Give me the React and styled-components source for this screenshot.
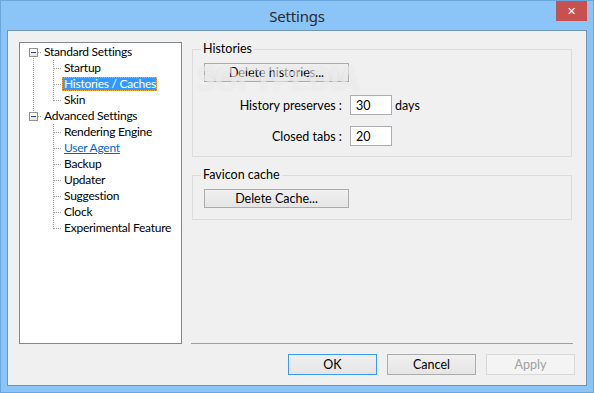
import React from "react";
import styled, { createGlobalStyle } from "styled-components";

const GlobalStyle = createGlobalStyle`
  html, body {
    margin: 0;
    padding: 0;
    background: #ffffff;
  }
  body {
    font-family: Lato, "Noto Sans", sans-serif;
    font-size: 12px;
    color: #000;
  }
`;

const tree = [
  {
    label: "Standard Settings",
    children: ["Startup", "Histories / Caches", "Skin"],
  },
  {
    label: "Advanced Settings",
    children: [
      "Rendering Engine",
      "User Agent",
      "Backup",
      "Updater",
      "Suggestion",
      "Clock",
      "Experimental Feature",
    ],
  },
];

const Settings = () => {
  return (
    <Window>
      <TitleBar>
        <span />
        <Title>Settings</Title>
        <CloseButton>✕</CloseButton>
      </TitleBar>

      <Client>
        <TopRow>
          <Tree>
            {tree.map((node, i) => {
              const last = i === tree.length - 1;
              return (
                <React.Fragment key={node.label}>
                  <Row>
                    <RootCell $above={i > 0} $below={!last}>
                      <Expander />
                    </RootCell>
                    <Label>{node.label}</Label>
                  </Row>
                  {node.children.map((child, j) => (
                    <Row key={child}>
                      <Cell $width={22} $offset={13} $line={last ? "none" : "full"} />
                      <Cell
                        $width={20}
                        $offset={11}
                        $line={j === node.children.length - 1 ? "half" : "full"}
                        $branch
                      />
                      <Label
                        $selected={child === "Histories / Caches"}
                        $link={child === "User Agent"}
                      >
                        {child}
                      </Label>
                    </Row>
                  ))}
                </React.Fragment>
              );
            })}
          </Tree>

          <RightPane>
            <Group>
              <Legend>Histories</Legend>
              <Watermark aria-hidden="true">SOFTPEDIA</Watermark>
              <Button $wide>Delete histories...</Button>
              <FieldRow $first>
                <FieldLabel>History preserves :</FieldLabel>
                <Input defaultValue="30" />
                <Unit>days</Unit>
              </FieldRow>
              <FieldRow>
                <FieldLabel>Closed tabs :</FieldLabel>
                <Input defaultValue="20" />
              </FieldRow>
            </Group>

            <Group $second>
              <Legend>Favicon cache</Legend>
              <Button $wide>Delete Cache...</Button>
            </Group>
          </RightPane>
        </TopRow>

        <ButtonRow>
          <Button $default>OK</Button>
          <Button>Cancel</Button>
          <Button disabled>Apply</Button>
        </ButtonRow>
      </Client>
    </Window>
  );
};

const Window = styled.div`
  width: 594px;
  height: 393px;
  box-sizing: border-box;
  border: 1px solid #6aa5dc;
  background: #8bc5f8;
  display: flex;
  flex-direction: column;
`;

const TitleBar = styled.div`
  height: 29px;
  display: grid;
  grid-template-columns: 1fr auto 1fr;
  align-items: start;
`;

const Title = styled.div`
  font-family: "Noto Sans", sans-serif;
  font-size: 15px;
  color: #2b2b2b;
  line-height: 31px;
  letter-spacing: -0.2px;
`;

const CloseButton = styled.div`
  justify-self: end;
  margin-right: 6px;
  width: 31px;
  height: 20px;
  background: #c75050;
  color: #ffffff;
  font-family: "DejaVu Sans", sans-serif;
  font-size: 11px;
  font-weight: bold;
  display: flex;
  align-items: center;
  justify-content: center;
`;

const Client = styled.div`
  margin: 0 6px 6px;
  flex: 1;
  box-sizing: border-box;
  border: 1px solid #6f94b8;
  background: #f0f0f0;
  padding: 9px 11px 10px 11px;
  display: flex;
  flex-direction: column;
`;

const TopRow = styled.div`
  display: flex;
  height: 304px;
`;

const Tree = styled.div`
  width: 163px;
  height: 302px;
  margin-top: 2px;
  box-sizing: border-box;
  border: 1px solid #828790;
  background: #ffffff;
  padding-top: 1px;
`;

const Row = styled.div`
  display: flex;
  height: 16px;
  align-items: center;
`;

const dots = (dir) =>
  `linear-gradient(${dir}, #a0a0a0 50%, transparent 50%)`;

const RootCell = styled.div`
  position: relative;
  width: 22px;
  height: 16px;
  display: flex;
  align-items: center;
  &::before {
    content: "";
    position: absolute;
    left: 13px;
    width: 1px;
    top: ${(p) => (p.$above ? "0" : "8px")};
    bottom: ${(p) => (p.$below ? "0" : "8px")};
    background-image: ${dots("to bottom")};
    background-size: 1px 2px;
  }
  &::after {
    content: "";
    position: absolute;
    left: 18px;
    width: 4px;
    top: 8px;
    height: 1px;
    background-image: ${dots("to right")};
    background-size: 2px 1px;
  }
`;

const Expander = styled.span`
  position: relative;
  z-index: 1;
  margin-left: 9px;
  margin-top: 1px;
  width: 9px;
  height: 9px;
  box-sizing: border-box;
  border: 1px solid #919191;
  background: linear-gradient(#ffffff, #e6e6e6);
  &::after {
    content: "";
    position: absolute;
    left: 1px;
    top: 3px;
    width: 5px;
    height: 1px;
    background: #2c4a6e;
  }
`;

const Cell = styled.div`
  position: relative;
  width: ${(p) => p.$width}px;
  height: 16px;
  flex-shrink: 0;
  &::before {
    content: "";
    display: ${(p) => (p.$line === "none" ? "none" : "block")};
    position: absolute;
    left: ${(p) => p.$offset}px;
    width: 1px;
    top: 0;
    height: ${(p) => (p.$line === "half" ? "9px" : "16px")};
    background-image: ${dots("to bottom")};
    background-size: 1px 2px;
  }
  &::after {
    content: "";
    display: ${(p) => (p.$branch ? "block" : "none")};
    position: absolute;
    left: ${(p) => p.$offset + 1}px;
    width: ${(p) => p.$width - p.$offset - 1}px;
    top: 8px;
    height: 1px;
    background-image: ${dots("to right")};
    background-size: 2px 1px;
  }
`;

const Label = styled.span`
  padding: 0 1px 0 2px;
  height: 14px;
  line-height: 14px;
  white-space: nowrap;
  box-sizing: border-box;
  letter-spacing: -0.25px;
  color: ${(p) => (p.$selected ? "#ffffff" : p.$link ? "#0066cc" : "#000000")};
  background: ${(p) => (p.$selected ? "#3399ff" : "transparent")};
  outline: ${(p) => (p.$selected ? "1px dotted #ffaa33" : "none")};
  outline-offset: -1px;
  text-decoration: ${(p) => (p.$link ? "underline" : "none")};
`;

const RightPane = styled.div`
  flex: 1;
  margin-left: 9px;
  margin-right: 2px;
  border-bottom: 1px solid #a0a0a0;
  display: flex;
  flex-direction: column;
`;

const Group = styled.fieldset`
  position: relative;
  margin: ${(p) => (p.$second ? "10px" : "1px")} 1px 0 1px;
  padding: 6px 10px ${(p) => (p.$second ? "11px" : "10px")} 11px;
  border: 1px solid #dcdcdc;
  min-width: 0;
  display: flex;
  flex-direction: column;
  align-items: flex-start;
`;

const Legend = styled.legend`
  margin-left: -3px;
  padding: 0 2px;
  line-height: 16px;
  font-size: 12.5px;
  color: #000;
`;

const Watermark = styled.div`
  position: absolute;
  left: 3px;
  top: 10px;
  line-height: 26px;
  height: 26px;
  font-family: "DejaVu Sans", sans-serif;
  font-size: 33px;
  font-weight: bold;
  letter-spacing: -2px;
  color: rgba(255, 255, 255, 0.5);
  text-shadow: 0 0 1px rgba(170, 170, 170, 0.3);
  pointer-events: none;
  z-index: 2;
  transform: scaleX(0.85);
  transform-origin: left center;
`;

const Button = styled.button`
  width: ${(p) => (p.$wide ? "145px" : "89px")};
  height: ${(p) => (p.$wide ? "19px" : "21px")};
  padding: 0;
  box-sizing: border-box;
  font-family: inherit;
  font-size: 12.5px;
  color: ${(p) => (p.disabled ? "#a0a0a0" : "#000000")};
  background: ${(p) =>
    p.disabled ? "#f4f4f4" : "linear-gradient(#f0f0f0, #e5e5e5)"};
  border: 1px solid
    ${(p) => (p.disabled ? "#d9d9d9" : p.$default ? "#3c9af0" : "#acacac")};
  border-radius: 0;
  line-height: 17px;
`;

const FieldRow = styled.div`
  display: flex;
  align-items: center;
  margin-top: ${(p) => (p.$first ? "13px" : "11px")};
  margin-left: -11px;
  font-size: 12.5px;
`;

const FieldLabel = styled.span`
  width: 149px;
  text-align: right;
  margin-right: 8px;
  white-space: nowrap;
`;

const Input = styled.input`
  width: 42px;
  height: 20px;
  box-sizing: border-box;
  border: 1px solid #abadb3;
  background: #ffffff;
  font-family: inherit;
  font-size: 12.5px;
  padding: 0 5px;
  outline: none;
`;

const Unit = styled.span`
  margin-left: 3px;
`;

const ButtonRow = styled.div`
  display: flex;
  justify-content: flex-end;
  gap: 10px;
  margin-top: 10px;
`;

export default function App() {
  return (
    <>
      <GlobalStyle />
      <Settings />
    </>
  );
}
